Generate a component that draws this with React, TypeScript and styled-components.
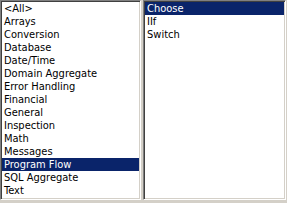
import React, { FC, useState } from 'react'
import styled, { createGlobalStyle } from 'styled-components'

const GlobalStyle = createGlobalStyle`
    html, body {
        margin: 0;
        padding: 0;
        background: #d4d0c8;
    }
    body {
        font-family: "DejaVu Sans Condensed", "DejaVu Sans", sans-serif;
        font-stretch: condensed;
    }
`

const Panel = styled.div`
    display: flex;
    gap: 2px;
    width: 287px;
    height: 203px;
    box-sizing: border-box;
`

const ListBox = styled.ul<{ w: number }>`
    width: ${({ w }) => w}px;
    height: 200px;
    box-sizing: border-box;
    margin: 0;
    padding: 1px;
    list-style: none;
    background: white;
    border-style: solid;
    border-width: 1px;
    border-color: #808080 #ffffff #ffffff #808080;
    box-shadow: inset 1px 1px 0 #404040, inset -1px -1px 0 #d4d0c8;
    overflow: hidden;
`

const Item = styled.li<{ selected: boolean }>`
    height: 13px;
    line-height: 13px;
    padding-left: 2px;
    font-size: 11px;
    white-space: nowrap;
    cursor: default;
    background: ${({ selected }) => (selected ? '#0a246a' : 'transparent')};
    color: ${({ selected }) => (selected ? 'white' : 'black')};
`

const categories = [
    '<All>', 'Arrays', 'Conversion', 'Database', 'Date/Time', 'Domain Aggregate',
    'Error Handling', 'Financial', 'General', 'Inspection', 'Math', 'Messages',
    'Program Flow', 'SQL Aggregate', 'Text',
]

const functions = ['Choose', 'IIf', 'Switch']

const App: FC = () => {
    const [category, setCategory] = useState('Program Flow')
    const [fn, setFn] = useState('Choose')
    return (
        <>
            <GlobalStyle />
            <Panel>
                <ListBox w={141}>
                    {categories.map(c => (
                        <Item key={c} selected={c === category} onClick={() => setCategory(c)}>{c}</Item>
                    ))}
                </ListBox>
                <ListBox w={143}>
                    {functions.map(f => (
                        <Item key={f} selected={f === fn} onClick={() => setFn(f)}>{f}</Item>
                    ))}
                </ListBox>
            </Panel>
        </>
    )
}

export default App
